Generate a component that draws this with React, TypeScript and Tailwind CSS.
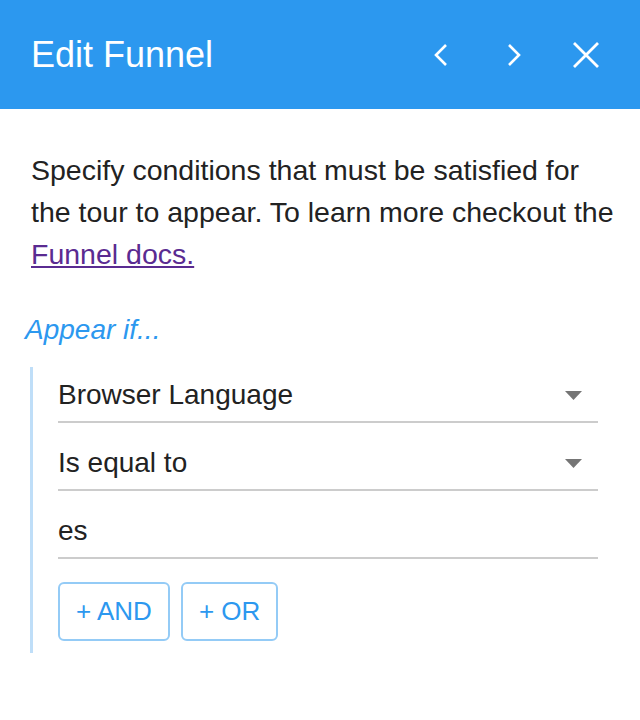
import React from "react";

const font = { fontFamily: '"Liberation Sans", Arial, sans-serif' };

function Caret() {
  return (
    <svg width="17" height="9" viewBox="0 0 17 9" className="mr-4 shrink-0" aria-hidden>
      <path d="M0 0h17L8.5 9z" fill="#757575" />
    </svg>
  );
}

function FieldRow({ value, select, first }: { value: string; select?: boolean; first?: boolean }) {
  return (
    <div
      className={`flex items-center justify-between border-b-2 border-[#cccccc] pb-[10px] ${first ? "" : "pt-6"}`}
    >
      <span className="text-[28px] leading-[32px] text-[#222222]">{value}</span>
      {select && <Caret />}
    </div>
  );
}

export default function App() {
  return (
    <div className="h-[720px] w-[640px] bg-white" style={font}>
      <div className="flex h-[109px] items-center justify-between bg-[#2c98ef] pl-[31px] pr-10 text-white">
        <h1 className="text-[36px] leading-none">Edit Funnel</h1>
        <div className="flex items-center">
          <svg width="16" height="24" viewBox="0 0 16 24" aria-hidden>
            <path d="M13 2 3 12l10 10" fill="none" stroke="white" strokeWidth="2.6" />
          </svg>
          <svg width="16" height="24" viewBox="0 0 16 24" className="ml-[57px]" aria-hidden>
            <path d="m3 2 10 10L3 22" fill="none" stroke="white" strokeWidth="2.6" />
          </svg>
          <svg width="28" height="28" viewBox="0 0 28 28" className="ml-[50px]" aria-hidden>
            <path d="M2 2l24 24M26 2 2 26" fill="none" stroke="white" strokeWidth="2.8" />
          </svg>
        </div>
      </div>

      <div className="pt-10">
        <p className="pl-[31px] pr-5 text-[28.5px] leading-[42px] text-[#222222]">
          Specify conditions that must be satisfied for the tour to appear. To learn more checkout the{" "}
          <a href="#" className="text-[#5a2b91] underline">
            Funnel docs.
          </a>
        </p>

        <p className="mt-[39px] pl-[25px] text-[28px] italic leading-8 text-[#2c98ef]">Appear if...</p>

        <div className="ml-[30px] mr-[42px] mt-[21px] border-l-[3px] border-[#bfdef8] pb-3 pl-[25px] pt-3">
          <FieldRow value="Browser Language" select first />
          <FieldRow value="Is equal to" select />
          <FieldRow value="es" />
          <div className="mt-[23px] flex gap-[11px]">
            <button className="h-[59px] rounded-md border-2 border-[#94cbf6] px-4 text-[26px] text-[#2c98ef]">
              + AND
            </button>
            <button className="h-[59px] rounded-md border-2 border-[#94cbf6] px-4 text-[26px] text-[#2c98ef]">
              + OR
            </button>
          </div>
        </div>
      </div>
    </div>
  );
}
